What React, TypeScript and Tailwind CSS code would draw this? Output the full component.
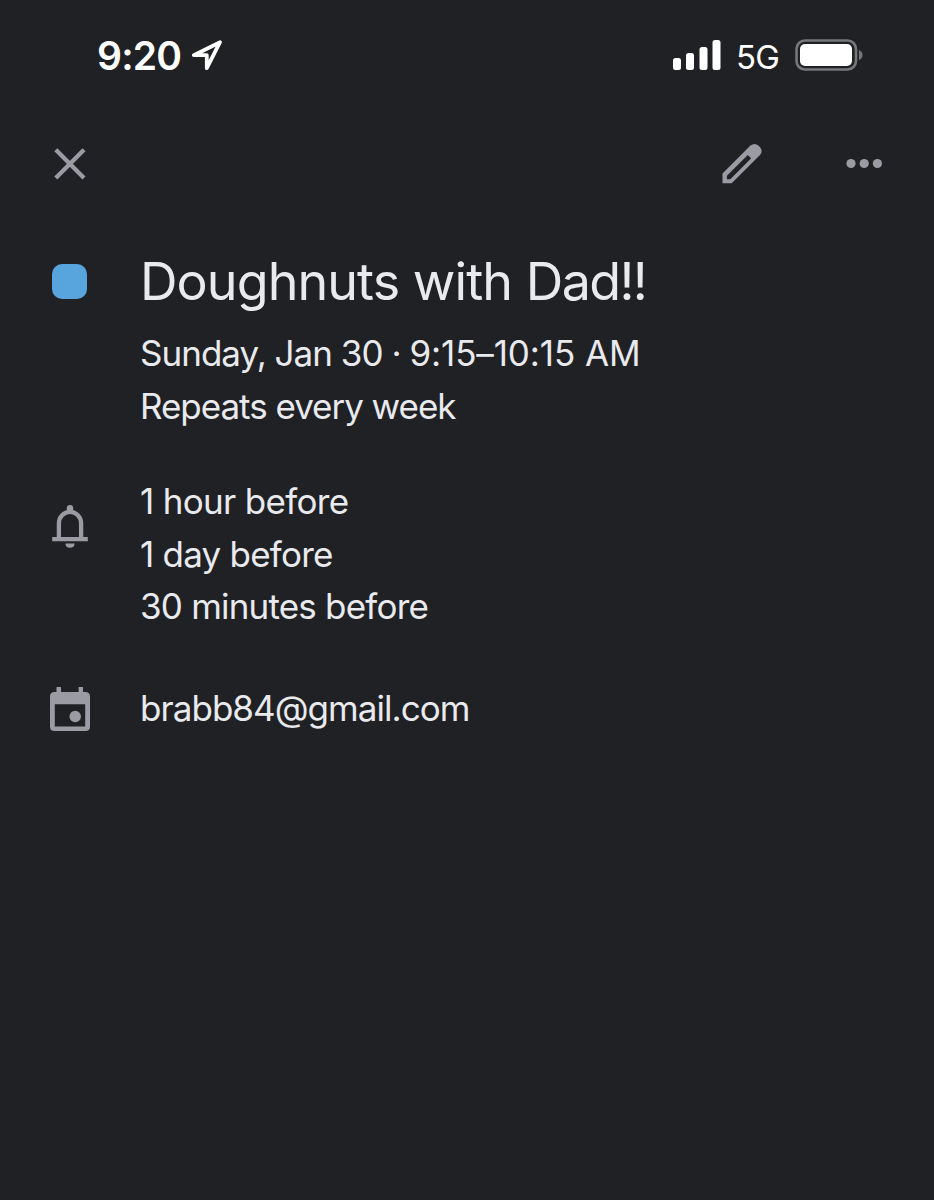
const reminders = [
  { label: '1 hour before', tracking: 'tracking-[-0.68px]' },
  { label: '1 day before', tracking: 'tracking-[-0.77px]' },
  { label: '30 minutes before', tracking: 'tracking-[-0.8px]' },
];

function StatusBar() {
  return (
    <div className="flex h-[110px] items-start justify-between pl-[97px] pr-[71px] pt-[35px] text-white">
      <div className="flex h-10 items-center">
        <span className="mt-0.5 w-[85px] whitespace-nowrap text-[39px] font-semibold leading-10 tracking-[-0.8px]">9:20</span>
        <svg className="ml-2" width="34" height="34" viewBox="0 0 34 34" fill="none">
          <path
            d="M30 4.2 3.8 17.2 H16.8 V30.2 Z"
            stroke="currentColor"
            strokeWidth="3.8"
            strokeLinejoin="round"
          />
        </svg>
      </div>
      <div className="flex h-10 items-center">
        <svg width="48" height="30" viewBox="0 0 48 30" fill="currentColor">
          <rect x="0" y="18" width="8" height="12" rx="2.5" />
          <rect x="13" y="13" width="8" height="17" rx="2.5" />
          <rect x="26.5" y="7" width="8" height="23" rx="2.5" />
          <rect x="39.5" y="0" width="8" height="30" rx="2.5" />
        </svg>
        <span className="ml-[15px] mr-px mt-1 w-[43px] whitespace-nowrap text-[33px] leading-10 tracking-[-0.8px]">5G</span>
        <svg className="ml-[15px]" width="68" height="32" viewBox="0 0 68 32" fill="none">
          <rect x="1.5" y="1.5" width="59.5" height="29" rx="8.5" stroke="#76777a" strokeWidth="2.6" />
          <rect x="5" y="5" width="52" height="22" rx="5" fill="currentColor" />
          <path d="M64 11 Q67.5 12.5 67.5 16 T64 21 Z" fill="#76777a" />
        </svg>
      </div>
    </div>
  );
}

function Toolbar() {
  return (
    <div className="flex h-[108px] items-center justify-between pl-[53px] pr-[51px] text-[#9b9ca3]">
      <svg width="34" height="34" viewBox="0 0 34 34" stroke="currentColor" strokeWidth="4.3">
        <path d="M2.8 2.8 31 31 M31 2.8 2.8 31" />
      </svg>
      <div className="flex items-center">
        <svg width="42" height="42" viewBox="0 0 42 42" fill="currentColor" fillRule="evenodd">
          <path d="M1.5 30.5 29.5 2.6 Q33.5-.8 37.4 2.6 L39 4.2 Q42.4 8.1 39 12 L10.7 40.3 H1.5 Z M5.9 32.8 V36.2 H9.3 L30.2 15.3 26.8 11.9 Z" />
        </svg>
        <svg className="ml-[83px]" width="37" height="12" viewBox="0 0 37 12" fill="currentColor">
          <circle cx="5" cy="5.5" r="4.6" />
          <circle cx="18.2" cy="5.5" r="4.6" />
          <circle cx="31.4" cy="5.5" r="4.6" />
        </svg>
      </div>
    </div>
  );
}

function BellIcon() {
  return (
    <svg width="40" height="46" viewBox="0 0 40 46" fill="none">
      <path d="M8.9 36 V20 A11.1 11.1 0 0 1 31.1 20 V36" stroke="#9b9ca3" strokeWidth="4.3" />
      <path d="M16.8 9 V5 Q16.8 2 20 2 T23.2 5 V9 Z M2.2 34 H37.8 V38.2 H2.2 Z M15.4 40.4 H24.6 Q24.4 44.8 20 44.8 T15.4 40.4 Z" fill="#9b9ca3" />
    </svg>
  );
}

function CalendarIcon() {
  return (
    <svg width="40" height="46" viewBox="0 0 40 46" fill="#9b9ca3" fillRule="evenodd">
      <path d="M6.5 1 H11 V6 H28.6 V1 H33 V6 H35.5 Q40 6 40 10.5 V40.5 Q40 45 35.5 45 H4.5 Q0 45 0 40.5 V10.5 Q0 6 4.5 6 H6.5 Z M4.8 18.3 V40.6 H35.2 V18.3 Z" />
      <circle cx="25.2" cy="30.5" r="5.7" />
    </svg>
  );
}

export default function App() {
  return (
    <div className="min-h-[1200px] w-full bg-[#202125] font-['Inter',sans-serif] text-[#e9eaee]">
      <StatusBar />
      <Toolbar />

      <main className="pl-[50px] pt-[34px] text-[35px] leading-[52.5px]">
        {/* Title and schedule */}
        <section className="flex">
          <div className="flex w-[90px] shrink-0 pl-0.5 pt-3">
            <div className="size-[35px] rounded-[10px] bg-[#58a5de]" />
          </div>
          <div className="whitespace-nowrap">
            <h1 className="h-[75px] text-[52px] leading-[60px] tracking-[-0.93px]">
              Doughnuts with <span className="tracking-[-1.6px]">Dad!!</span>
            </h1>
            <p className="tracking-[-0.98px]">
              Sunday, Jan 30 · <span className="tracking-[-0.1px]">9:15–10:15 AM</span>
            </p>
            <p className="tracking-[-1.03px]">Repeats every week</p>
          </div>
        </section>

        {/* Reminders */}
        <section className="mt-[43px] flex">
          <div className="w-[90px] shrink-0 pt-7">
            <BellIcon />
          </div>
          <ul className="whitespace-nowrap">
            {reminders.map((reminder) => (
              <li key={reminder.label} className={reminder.tracking}>
                {reminder.label}
              </li>
            ))}
          </ul>
        </section>

        {/* Calendar account */}
        <section className="mt-[49px] flex">
          <div className="w-[90px] shrink-0 pt-1">
            <CalendarIcon />
          </div>
          <p className="whitespace-nowrap tracking-[-0.95px]">brabb84@gmail.com</p>
        </section>
      </main>
    </div>
  );
}
